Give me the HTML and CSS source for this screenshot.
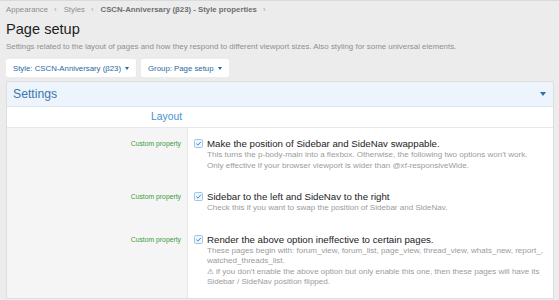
FILE: index.html
```html
<!DOCTYPE html>
<html lang="en">
<head>
<meta charset="utf-8">
<title>Page setup</title>
<link rel="stylesheet" href="styles.css">
</head>
<body>
<div class="page">
  <nav class="breadcrumb"><span class="crumb">Appearance</span><span class="sep">›</span><span class="crumb">Styles</span><span class="sep">›</span><span class="crumb crumb-strong">CSCN-Anniversary (β23) - Style properties</span><span class="sep">›</span></nav>
  <h1 class="title">Page setup</h1>
  <p class="desc">Settings related to the layout of pages and how they respond to different viewport sizes. Also styling for some universal elements.</p>
  <div class="buttons">
    <button class="menu-btn">Style: CSCN-Anniversary (β23)<span class="caret"></span></button>
    <button class="menu-btn">Group: Page setup<span class="caret"></span></button>
  </div>

  <section class="block">
    <header class="block-header">
      <h2 class="block-title">Settings</h2>
      <span class="header-caret"></span>
    </header>
    <div class="section-row">
      <div class="section-label">Layout</div>
    </div>

    <div class="form-row">
      <div class="row-label">Custom property</div>
      <div class="row-input">
        <label class="check">
          <span class="box"><svg viewBox="0 0 9 9" width="9" height="9"><rect x="0.5" y="0.5" width="8" height="8" rx="1" fill="#edf5fd" stroke="#9fc6ea"/><path d="M2.3 4.6 L3.9 6.1 L6.8 2.9" fill="none" stroke="#3d86cc" stroke-width="1"/></svg></span>
          <span class="check-text">Make the position of Sidebar and SideNav swappable.</span>
        </label>
        <div class="hint">This turns the p-body-main into a flexbox. Otherwise, the following two options won't work.<br>Only effective if your browser viewport is wider than @xf-responsiveWide.</div>
      </div>
    </div>

    <div class="form-row">
      <div class="row-label">Custom property</div>
      <div class="row-input">
        <label class="check">
          <span class="box"><svg viewBox="0 0 9 9" width="9" height="9"><rect x="0.5" y="0.5" width="8" height="8" rx="1" fill="#edf5fd" stroke="#9fc6ea"/><path d="M2.3 4.6 L3.9 6.1 L6.8 2.9" fill="none" stroke="#3d86cc" stroke-width="1"/></svg></span>
          <span class="check-text">Sidebar to the left and SideNav to the right</span>
        </label>
        <div class="hint">Check this if you want to swap the position of Sidebar and SideNav.</div>
      </div>
    </div>

    <div class="form-row">
      <div class="row-label">Custom property</div>
      <div class="row-input">
        <label class="check">
          <span class="box"><svg viewBox="0 0 9 9" width="9" height="9"><rect x="0.5" y="0.5" width="8" height="8" rx="1" fill="#edf5fd" stroke="#9fc6ea"/><path d="M2.3 4.6 L3.9 6.1 L6.8 2.9" fill="none" stroke="#3d86cc" stroke-width="1"/></svg></span>
          <span class="check-text">Render the above option ineffective to certain pages.</span>
        </label>
        <div class="hint">These pages begin with: forum_view, forum_list, page_view, thread_view, whats_new, report_,<br>watched_threads_list.<br><span class="warn">&#x26A0;&#xFE0E;</span> if you don't enable the above option but only enable this one, then these pages will have its<br>Sidebar / SideNav position flipped.</div>
      </div>
    </div>
  </section>
</div>
</body>
</html>
```

FILE: styles.css
```css
html, body {
  margin: 0;
  padding: 0;
}
body {
  background: #ececec;
  font-family: "Liberation Sans", Arial, sans-serif;
  color: #1c1c1c;
  border-top: 1px solid #dadada;
}
.page {
  padding: 0 5px 0 6px;
}
.breadcrumb {
  height: 17px;
  line-height: 17px;
  font-size: 7.8px;
  color: #8e8e8e;
  white-space: nowrap;
}
.crumb-strong {
  font-weight: bold;
  color: #6e6e6e;
}
.sep {
  display: inline-block;
  margin: 0 7px 0 6px;
  color: #a3a3a3;
}
.title {
  margin: 0;
  font-size: 14.6px;
  font-weight: normal;
  line-height: 22px;
  color: #1d1d1d;
}
.desc {
  margin: 1px 0 0;
  font-size: 7.9px;
  line-height: 12px;
  color: #8f8f8f;
  white-space: nowrap;
}
.buttons {
  display: flex;
  gap: 5px;
  margin-top: 6px;
}
.menu-btn {
  display: flex;
  align-items: center;
  height: 18px;
  padding: 0 7px 0 7px;
  border: none;
  border-radius: 2px;
  background: #ffffff;
  font-family: inherit;
  font-size: 7.8px;
  color: #2d67a3;
  white-space: nowrap;
}
.caret {
  display: inline-block;
  margin-left: 4px;
  border-left: 2.5px solid transparent;
  border-right: 2.5px solid transparent;
  border-top: 3px solid #2d67a3;
}
.block {
  margin-top: 4px;
  width: 548px;
  background: #ffffff;
  border: 1px solid #dedede;
  box-sizing: border-box;
}
.block-header {
  display: flex;
  align-items: center;
  justify-content: space-between;
  height: 25px;
  padding: 0 7px 0 6px;
  background: #edf4fb;
  border-bottom: 1px solid #dbe6f0;
  box-sizing: border-box;
}
.block-title {
  margin: 0;
  font-size: 12.2px;
  font-weight: normal;
  color: #3a76b2;
}
.header-caret {
  border-left: 3px solid transparent;
  border-right: 3px solid transparent;
  border-top: 4px solid #2f6ead;
}
.section-row {
  height: 21px;
  border-bottom: 1px solid #e8e8e8;
  box-sizing: border-box;
}
.section-label {
  width: 175px;
  text-align: right;
  font-size: 10.3px;
  line-height: 20px;
  color: #4a8fcf;
}
.form-row {
  display: grid;
  grid-template-columns: 181px 1fr;
}
.row-label {
  background: #f5f5f5;
  border-right: 1px solid #e6e6e6;
  padding: 9px 6px 10px 0;
  text-align: right;
  font-size: 6.8px;
  line-height: 13px;
  color: #3d9c3d;
  white-space: nowrap;
}
.row-input {
  padding: 9px 6px 10px 6px;
}
.check {
  display: flex;
  align-items: center;
  height: 13px;
}
.box {
  display: flex;
  width: 9px;
  height: 9px;
  margin-right: 4px;
}
.check-text {
  font-size: 9.7px;
  color: #1c1c1c;
  white-space: nowrap;
}
.hint {
  padding-left: 13px;
  font-size: 8.05px;
  line-height: 10.5px;
  color: #9c9c9c;
  white-space: nowrap;
}
.warn {
  font-family: "DejaVu Sans", sans-serif;
  font-size: 7.5px;
  color: #8a8a8a;
}
```
